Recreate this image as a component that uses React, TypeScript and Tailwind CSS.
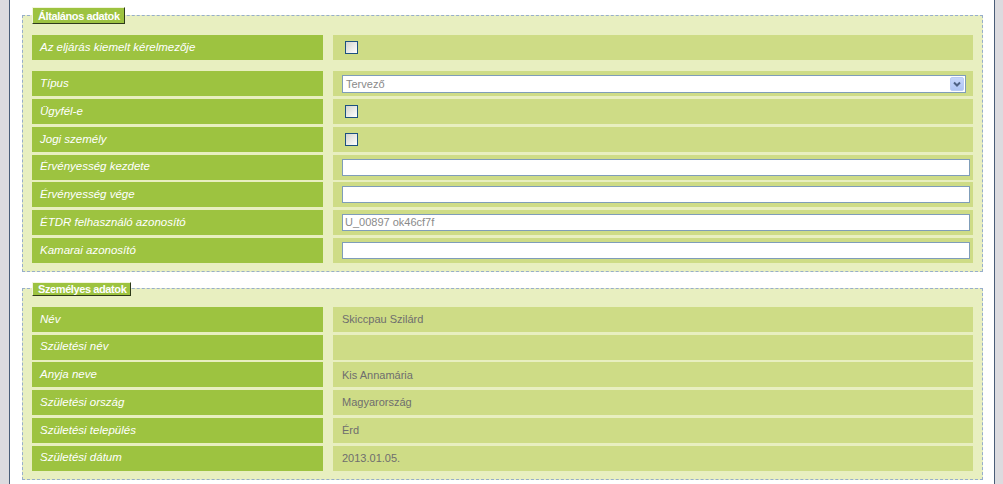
import type { ReactNode } from 'react';

type Row = { label: string; value: ReactNode; spaced?: boolean };

const font = { fontFamily: '"Liberation Sans", Arial, sans-serif' };

function Checkbox() {
  return <span className="block w-[13px] h-[13px] border border-[#1c5180] bg-gradient-to-br from-[#d4d4ce] to-white" />;
}

function TextInput({ value = '' }: { value?: string }) {
  return (
    <div className="h-[17px] mr-[3px] border border-[#7f9db9] bg-white pl-[2px] text-[11px] leading-[15px] text-[#8a8a8a]">
      {value}
    </div>
  );
}

function Select({ value }: { value: string }) {
  return (
    <div className="h-[18px] mr-[7px] border border-[#7f9db9] bg-white flex items-center">
      <span className="flex-1 pl-[3px] text-[11px] text-[#8a8a8a]">{value}</span>
      <span className="w-[14px] h-[14px] mr-[1px] rounded-[2px] bg-gradient-to-b from-[#c6d6fb] to-[#aec4f4] border border-[#b9ccf5] flex items-center justify-center">
        <svg width="8" height="6" viewBox="0 0 8 6">
          <path d="M1 1.5 L4 4.5 L7 1.5" fill="none" stroke="#4d6185" strokeWidth="2" />
        </svg>
      </span>
    </div>
  );
}

function Fieldset({ title, rows, tall }: { title: string; rows: Row[]; tall?: boolean }) {
  return (
    <fieldset className="border border-dashed border-[#97aecb] bg-[#e8efc0] px-[9px] pt-[11px] pb-[8px]">
      <legend
        className={`${tall ? 'h-[17px] leading-[16px]' : 'h-[14px] leading-[13px]'} pl-[5px] pr-[4px] tracking-[-0.4px] bg-[#9dc340] text-white text-[11px] font-bold border border-t-[#f2f6dc] border-l-[#f2f6dc] border-r-[#2e3a1a] border-b-[#2e3a1a]`}
      >
        {title}
      </legend>
      <div className="flex flex-col gap-y-[2.75px]">
        {rows.map((r) => (
          <div key={r.label} className={`grid grid-cols-[291px_1fr] gap-x-[10px] h-[25px] ${r.spaced ? 'mb-[8.5px]' : ''}`}>
            <div className="bg-[#9dc340] pl-[8px] flex items-center text-white italic text-[11.5px]">{r.label}</div>
            <div className="bg-[#cedc86] pl-[9px] flex flex-col justify-center text-[11px] text-[#6e6e6e]">{r.value}</div>
          </div>
        ))}
      </div>
    </fieldset>
  );
}

export default function App() {
  const general: Row[] = [
    { label: 'Az eljárás kiemelt kérelmezője', value: <span className="pl-[3px]"><Checkbox /></span>, spaced: true },
    { label: 'Típus', value: <Select value="Tervező" /> },
    { label: 'Ügyfél-e', value: <span className="pl-[3px]"><Checkbox /></span> },
    { label: 'Jogi személy', value: <span className="pl-[3px]"><Checkbox /></span> },
    { label: 'Érvényesség kezdete', value: <TextInput /> },
    { label: 'Érvényesség vége', value: <TextInput /> },
    { label: 'ÉTDR felhasználó azonosító', value: <TextInput value="U_00897 ok46cf7f" /> },
    { label: 'Kamarai azonosító', value: <TextInput /> },
  ];

  const personal: Row[] = [
    { label: 'Név', value: 'Skiccpau Szilárd' },
    { label: 'Születési név', value: '' },
    { label: 'Anyja neve', value: 'Kis Annamária' },
    { label: 'Születési ország', value: 'Magyarország' },
    { label: 'Születési település', value: 'Érd' },
    { label: 'Születési dátum', value: '2013.01.05.' },
  ];

  return (
    <div className="w-[1003px] h-[484px] flex overflow-hidden bg-white" style={font}>
      <div className="w-[10px] bg-[#dcdbdf] border-r border-[#4a5d78]" />
      <div className="flex-1 pl-[12px] pr-[11px] pt-[7px] flex flex-col gap-[10px]">
        <Fieldset title="Általános adatok" rows={general} tall />
        <Fieldset title="Személyes adatok" rows={personal} />
      </div>
      <div className="w-[9px] bg-[#dcdbdf] border-l border-[#4a5d78]" />
    </div>
  );
}
